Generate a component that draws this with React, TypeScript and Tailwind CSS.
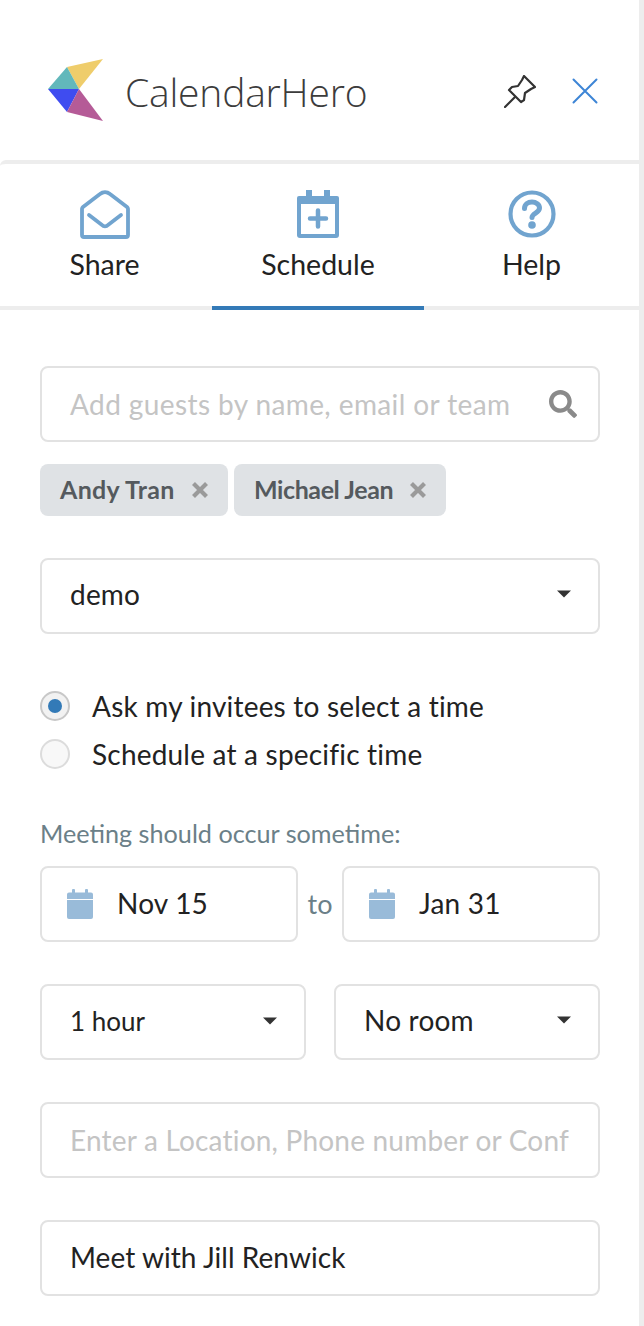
import React from "react";
import { FaSearch } from "react-icons/fa";

const Caret = () => (
  <svg width="16" height="8" viewBox="0 0 16 8" className="shrink-0">
    <path d="M1 0.5h14L8 7.500z" fill="#333333" />
  </svg>
);

const DateIcon = () => (
  <svg width="26" height="30" viewBox="0 0 26 30" className="shrink-0">
    <rect x="5" y="0" width="3" height="6" rx="1" fill="#99bbd9" />
    <rect x="18" y="0" width="3" height="6" rx="1" fill="#99bbd9" />
    <path d="M0 5.500a2 2 0 0 1 2-2h22a2 2 0 0 1 2 2V10H0z" fill="#99bbd9" />
    <path d="M0 11h26v17a2 2 0 0 1-2 2H2a2 2 0 0 1-2-2z" fill="#99bbd9" />
  </svg>
);

const Field = ({ className = "", children }: { className?: string; children: React.ReactNode }) => (
  <div
    className={`flex h-[76px] items-center rounded-[8px] border-2 border-[#e2e2e2] bg-white text-[28px] tracking-[0.2px] ${className}`}
  >
    {children}
  </div>
);

const Tag = ({ name, className }: { name: string; className: string }) => (
  <div className={`flex h-[52px] items-center rounded-[8px] bg-[#dfe2e5] pl-5 pr-[19px] text-[25px] font-bold text-[#555a5e] ${className}`}>
    <span>{name}</span>
    <svg width="18" height="18" viewBox="0 0 18 18" className="ml-auto">
      <path d="M2.500 2.500l13 13M15.500 2.500l-13 13" stroke="#9a9a9a" strokeWidth="4.200" />
    </svg>
  </div>
);

export default function App() {
  return (
    <div
      className="h-[1326px] w-[644px] overflow-hidden border-r-[5px] border-[#ededed] bg-white text-[#222222]"
      style={{ fontFamily: "Lato, sans-serif" }}
    >
      {/* Header */}
      <div className="flex h-[160px] items-center pl-[48px] pr-[41px] pt-[22px]">
        <svg width="56" height="64" viewBox="0 0 56 64" className="mb-[2px] shrink-0">
          <path d="M19 9L55 1 31 31z" fill="#efcd6b" />
          <path d="M19 9L31 31H0z" fill="#62b8bb" />
          <path d="M0 31H31L19 54z" fill="#3f4cf0" />
          <path d="M31 31L55 63 19 54z" fill="#b55b97" />
        </svg>
        <span
          className="ml-[21px] mt-[3px] text-[39px] font-light tracking-[-0.2px] text-[#3c3c3c]"
          style={{ fontFamily: "'Open Sans', sans-serif" }}
        >
          CalendarHero
        </span>
        <div className="ml-auto flex items-center gap-[36px]">
          <svg width="32" height="33" viewBox="0 0 32 33" fill="none" stroke="#333333" strokeWidth="2.200" strokeLinejoin="round" strokeLinecap="round">
            <path d="M1 32L11 22" />
            <path d="M20 1L31 12 27 14 21 18 20 25 17 27 5 15 8 12 14 11 18 5z" />
          </svg>
          <svg width="26" height="26" viewBox="0 0 26 26" fill="none" stroke="#3d85d6" strokeWidth="2" strokeLinecap="round">
            <path d="M1.500 1.500l23 23M24.500 1.500l-23 23" />
          </svg>
        </div>
      </div>

      {/* Tabs */}
      <div className="flex h-[150px] rounded-tl-[6px] border-y-4 border-[#ededed]">
        <button className="-mb-1 flex w-[212px] flex-col items-center pr-[3px] pt-[26px]">
          <svg width="50" height="50" viewBox="0 0 50 50" fill="none" stroke="#71a4cf" strokeWidth="3.800" strokeLinecap="round" strokeLinejoin="round">
            <path d="M2 19a3 3 0 0 1 1-2L20 4a8 8 0 0 1 10 0l17 13a3 3 0 0 1 1 2v26a2 2 0 0 1-2 2H4a2 2 0 0 1-2-2z" />
            <path d="M9 25l13 10a4 4 0 0 0 6 0l13-10" />
          </svg>
          <span className="mt-[5px] text-[28.500px] leading-[38px]">Share</span>
        </button>
        <button className="-mb-1 flex w-[212px] flex-col items-center border-b-4 border-[#337ab7] pt-[26px]">
          <svg width="44" height="50" viewBox="0 0 44 50" fill="none">
            <rect x="10" y="0" width="6" height="8" fill="#71a4cf" />
            <rect x="28" y="0" width="6" height="8" fill="#71a4cf" />
            <path d="M3 6h38a2 2 0 0 1 2 2v37a3 3 0 0 1-3 3H4a3 3 0 0 1-3-3V8a2 2 0 0 1 2-2z" fill="#71a4cf" />
            <rect x="5" y="14" width="34" height="30" fill="white" />
            <path d="M22 20.500v16M14 28.500h16" stroke="#71a4cf" strokeWidth="4.500" strokeLinecap="round" />
          </svg>
          <span className="mt-[5px] text-[28.500px] leading-[38px]">Schedule</span>
        </button>
        <button className="-mb-1 flex w-[215px] flex-col items-center pt-[26px]">
          <svg width="48" height="50" viewBox="0 0 48 50" fill="none">
            <circle cx="24" cy="24" r="21.500" stroke="#71a4cf" strokeWidth="4.200" />
            <path d="M16.500 18.500c0-4 3.500-6.500 7.500-6.500s7.500 2.500 7.500 6c0 5-7.500 5-7.500 9.500" stroke="#71a4cf" strokeWidth="5" strokeLinecap="round" />
            <circle cx="24" cy="35" r="3.800" fill="#71a4cf" />
          </svg>
          <span className="mt-[5px] text-[28.500px] leading-[38px]">Help</span>
        </button>
      </div>

      {/* Form */}
      <div className="ml-[40px] flex w-[560px] flex-col pt-[56px]">
        <Field className="pl-[28px] pr-[21px]">
          <span className="tracking-[0.4px] text-[#c4c4c4]">Add guests by name, email or team</span>
          <FaSearch size={28} className="ml-auto text-[#8a8a8a]" />
        </Field>

        <div className="mt-[22px] flex gap-[6px]">
          <Tag name="Andy Tran" className="w-[188px] tracking-[0.3px]" />
          <Tag name="Michael Jean" className="w-[212px] tracking-[-0.4px]" />
        </div>

        <Field className="mt-[42px] pb-[4px] pl-[28px] pr-[26px]">
          <span>demo</span>
          <span className="ml-auto flex"><Caret /></span>
        </Field>

        <div className="mt-[49px] flex h-[48px] items-center pb-[2px] text-[28px] tracking-[0.2px]">
          <span className="flex h-[30px] w-[30px] items-center justify-center rounded-full border-2 border-[#c8c8c8] bg-[#f2f2f2]">
            <span className="h-[14px] w-[14px] rounded-full bg-[#337ab7]" />
          </span>
          <span className="ml-[22px]">Ask my invitees to select a time</span>
        </div>
        <div className="flex h-[48px] items-center pb-[2px] text-[28px] tracking-[0.2px]">
          <span className="h-[30px] w-[30px] rounded-full border-2 border-[#dcdcdc] bg-[#f8f8f8]" />
          <span className="ml-[22px]">Schedule at a specific time</span>
        </div>

        <div className="mt-[38px] h-[32px] text-[25.200px] leading-[32px] text-[#6b8088]">
          Meeting should occur sometime:
        </div>

        <div className="mt-[17px] flex items-center">
          <Field className="w-[258px] pl-[25px]">
            <DateIcon />
            <span className="mb-[2px] ml-[24px]">Nov 15</span>
          </Field>
          <span className="w-[44px] text-center text-[27px] text-[#6b8088]">to</span>
          <Field className="w-[258px] pl-[25px]">
            <DateIcon />
            <span className="mb-[2px] ml-[24px]">Jan 31</span>
          </Field>
        </div>

        <div className="mt-[42px] flex gap-[28px]">
          <Field className="w-[266px] pb-[2px] pl-[28px] pr-[26px]">
            <span className="text-[26px] tracking-normal">1 hour</span>
            <span className="ml-auto flex"><Caret /></span>
          </Field>
          <Field className="w-[266px] pb-[4px] pl-[28px] pr-[26px]">
            <span>No room</span>
            <span className="ml-auto flex"><Caret /></span>
          </Field>
        </div>

        <Field className="mt-[42px] pl-[28px]">
          <span className="whitespace-nowrap text-[#c4c4c4]">Enter a Location, Phone number or Conf</span>
        </Field>

        <Field className="mt-[42px] pb-[2px] pl-[28px]">
          <span className="tracking-[0.05px]">Meet with Jill Renwick</span>
        </Field>
      </div>
    </div>
  );
}
